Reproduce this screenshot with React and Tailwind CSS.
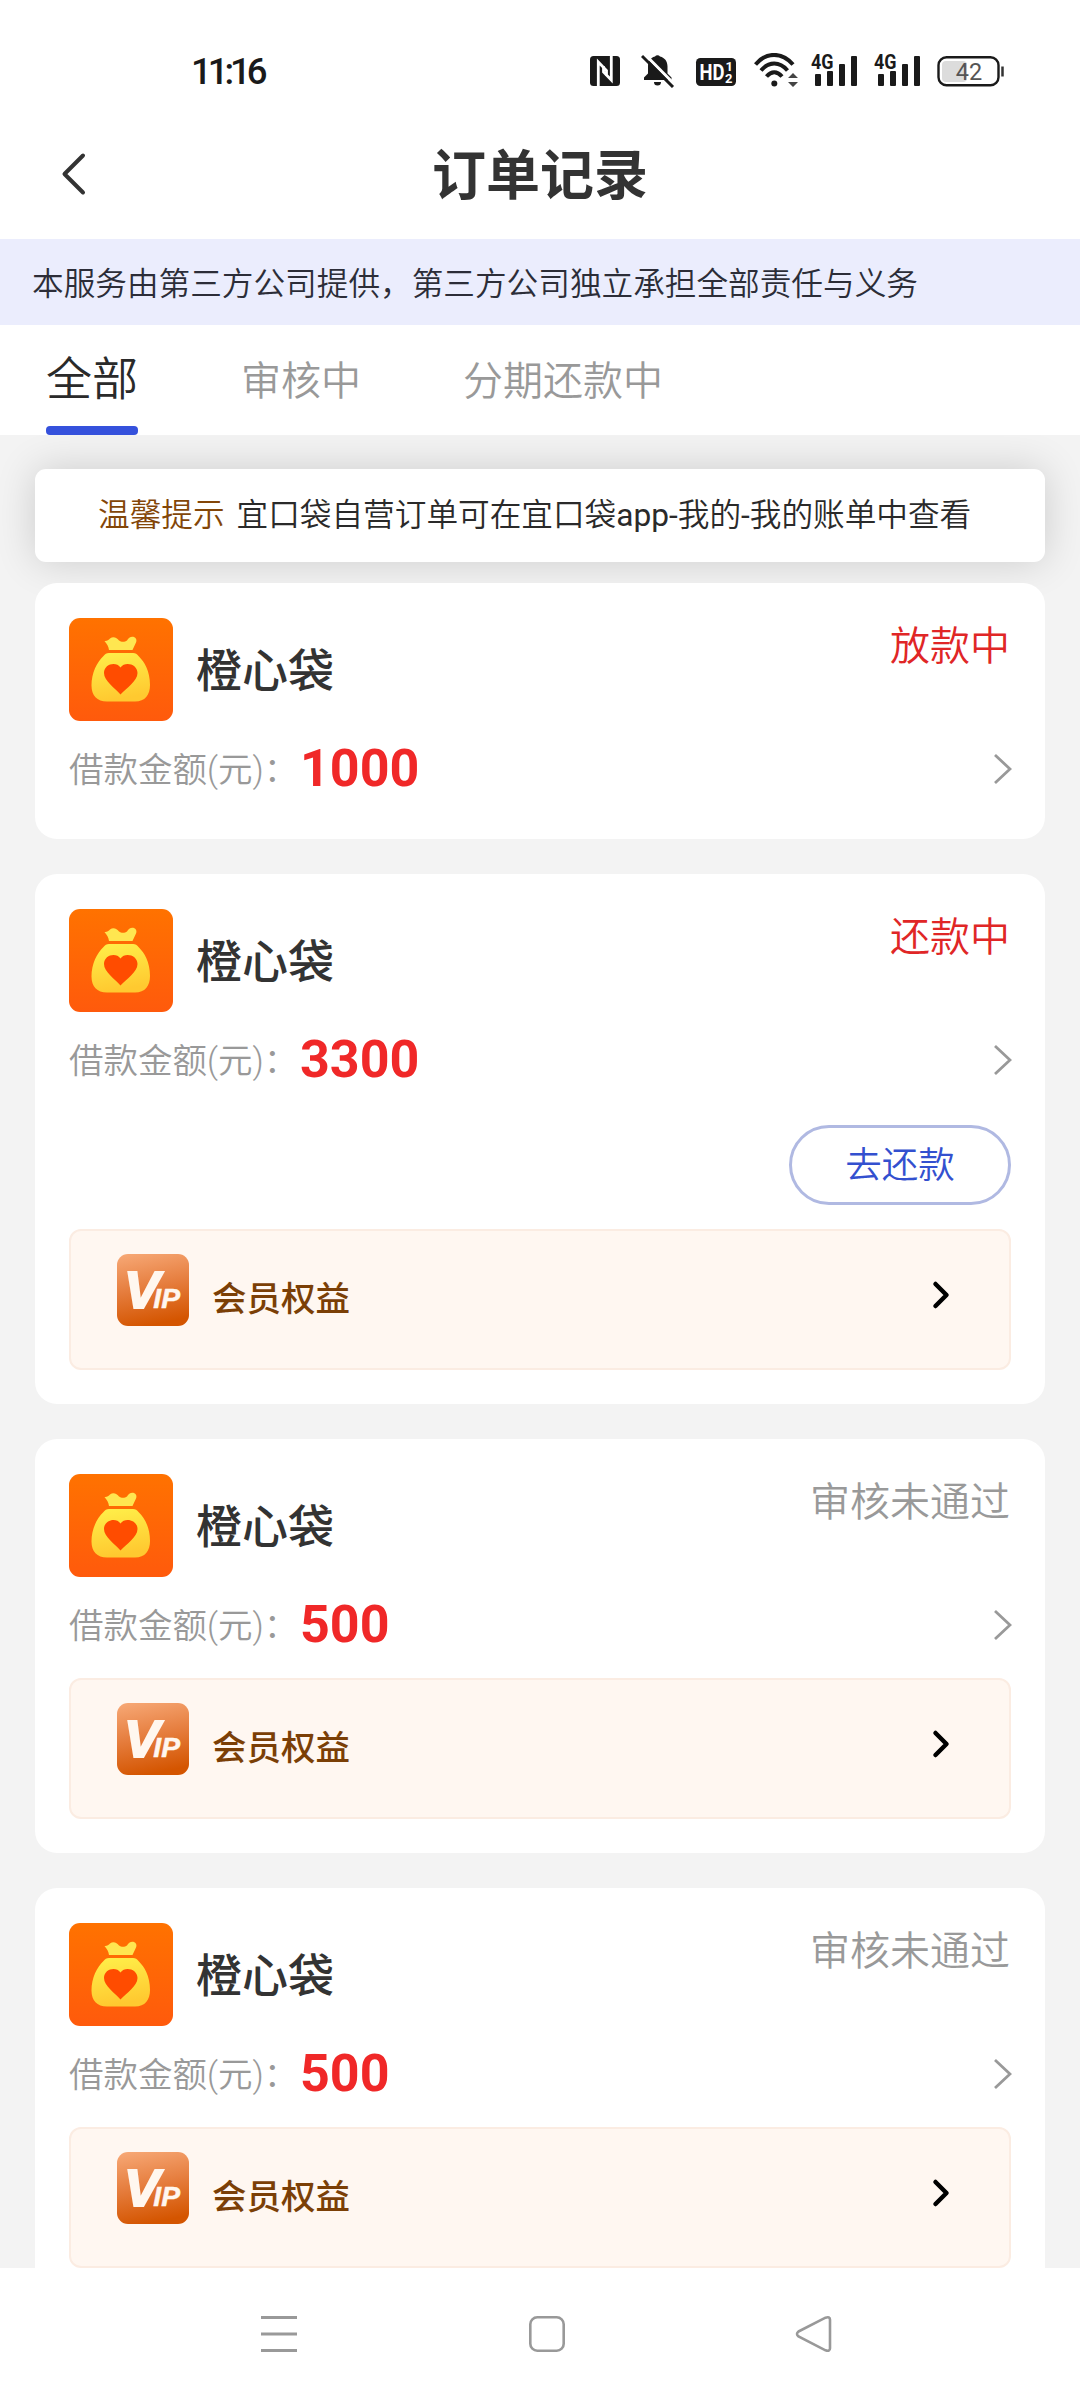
// Order history screen
const orders = [
  { id: 1, name: '橙心袋', amount: 1000, status: '放款中', active: true, repay: false, vip: false },
  { id: 2, name: '橙心袋', amount: 3300, status: '还款中', active: true, repay: true, vip: true },
  { id: 3, name: '橙心袋', amount: 500, status: '审核未通过', active: false, repay: false, vip: true },
  { id: 4, name: '橙心袋', amount: 500, status: '审核未通过', active: false, repay: false, vip: true },
];

function SignalIcon() {
  return (
    <svg className="w-[48px] h-[34px] overflow-visible" viewBox="0 0 48 34" fill="#1a1a1a">
      <text x="0" y="15.5" fontFamily="Roboto, sans-serif" fontWeight="700" fontSize="21" textLength="22.5" lengthAdjust="spacingAndGlyphs">4G</text>
      <rect x="4" y="21" width="6" height="12" rx="1" />
      <rect x="16" y="18" width="6" height="15" rx="1" />
      <rect x="28" y="11" width="6" height="22" rx="1" />
      <rect x="40" y="3" width="6" height="30" rx="1" />
    </svg>
  );
}

function StatusBar() {
  return (
    <div className="h-[110px] shrink-0 flex items-start justify-between pt-[53px] pl-[191px] pr-[75px] text-[#1a1a1a]">
      <span className="text-[36.5px] leading-[38px] font-medium tracking-[-4px]">11:16</span>
      <div className="flex h-[35px]">
        {/* NFC */}
        <svg className="w-[30px] h-[30px] mt-[3px]" viewBox="0 0 30 30">
          <rect width="30" height="30" rx="3.5" fill="#1a1a1a" />
          <path d="M8.300 30V6L16.500 14.500V20M21.300 0V24L13.500 16V10" fill="none" stroke="#fff" strokeWidth="2.800" />
        </svg>
        {/* Muted bell */}
        <svg className="w-[34px] h-[35px] ml-[21px]" viewBox="0 0 34 35" fill="#1a1a1a">
          <path d="M14 3.500a3 3 0 0 1 5 0c5 1.300 7.500 5 7.500 10v7l4 4v2.500H3v-2.500l4-4v-7c0-5 2-8.700 7-10z" />
          <path d="M13 29h7a3.500 3.500 0 0 1-7 0z" />
          <path d="M3.500 1 35 33" stroke="#fff" strokeWidth="3" />
          <path d="M1 3 32 34" stroke="#1a1a1a" strokeWidth="3" />
        </svg>
        {/* HD voice */}
        <svg className="w-[40px] h-[28px] mt-[5px] ml-[21px] overflow-visible" viewBox="0 0 40 28" fill="#fff" fontFamily="Roboto, sans-serif" fontWeight="700">
          <rect width="40" height="28" rx="4.500" fill="#1a1a1a" />
          <text x="3.500" y="22" fontSize="22" textLength="25" lengthAdjust="spacingAndGlyphs">HD</text>
          <text x="29.500" y="13" fontSize="13">1</text>
          <text x="29" y="25" fontSize="13">2</text>
        </svg>
        {/* Wi-Fi */}
        <svg className="w-[46px] h-[35px] ml-[18px]" viewBox="0 0 46 35" fill="none" stroke="#1a1a1a" strokeWidth="4">
          <path d="M1.500 11.500C12-1.300 28-1.300 39 11.500" />
          <path d="M7 17.500C15 8.300 25.500 8.300 33.500 17.500" />
          <path d="M12.500 23.500C17.500 17.800 23 17.800 28 23.500" />
          <circle cx="20.300" cy="30.500" r="3" fill="#1a1a1a" stroke="none" />
          <path d="M39 20l5 5h-10zM39 34l5-5h-10z" fill="#444" stroke="none" />
        </svg>
        <div className="ml-[11px] flex gap-[15px]">
          <SignalIcon />
          <SignalIcon />
        </div>
        {/* Battery */}
        <svg className="w-[68px] h-[35px] ml-[15px]" viewBox="0 0 68 35">
          <rect x="1.500" y="4.200" width="60" height="28" rx="8" fill="#fff" stroke="#1a1a1a" strokeWidth="2.400" />
          <rect x="5" y="8" width="25" height="21" rx="4" fill="#dcdcdc" />
          <path d="M65.500 13.500v10" stroke="#333" strokeWidth="2.500" />
          <text x="32" y="26.500" textAnchor="middle" fontFamily="Roboto, sans-serif" fontSize="23.500" fill="#555">42</text>
        </svg>
      </div>
    </div>
  );
}

function MoneyBag() {
  return (
    <svg className="w-[104px] h-[103px] shrink-0" viewBox="0 0 104 103">
      <defs>
        <linearGradient id="bagBg" x1="0" y1="0" x2="0" y2="1">
          <stop offset="0" stopColor="#ff7200" />
          <stop offset="1" stopColor="#ff5a0c" />
        </linearGradient>
        <linearGradient id="bagFill" x1="0" y1="0" x2="0.200" y2="1">
          <stop offset="0" stopColor="#fff04a" />
          <stop offset="1" stopColor="#ffc930" />
        </linearGradient>
      </defs>
      <rect width="104" height="103" rx="11" fill="url(#bagBg)" />
      <path d="M40 32c-.500-3.500-2-6-4.500-9 2.500.300 4-1 5.500-2.500 3.500-2.500 7-.500 9 2 2.500 2 6 1.500 8 0 1.500-2.500 4-4.500 7-3.500 2.500 1 3 3.500 2 5.500L63.500 32z" fill="#ffe650" />
      <path d="M40 35h24c2.500 0 4 1 5.500 3 6 6 11.500 15 11.500 29 0 10-5 16.500-15 16.500H38c-10 0-15.500-6-15.500-16C22.500 55 28 44 34.500 38c1.500-2 3-3 5.500-3z" fill="url(#bagFill)" />
      <path d="M51.500 76.500C46 70 35 63 35 55 35 46 47 43 51.500 49.500 56 43 68.500 46 68.500 55 68.500 63 57.500 70 51.500 76.500z" fill="#ff4c00" />
    </svg>
  );
}

function VipBadge() {
  return (
    <svg className="w-[72px] h-[72px] shrink-0" viewBox="0 0 72 72">
      <defs>
        <linearGradient id="vipBg" x1="0.200" y1="0" x2="0.400" y2="1">
          <stop offset="0" stopColor="#f6a673" />
          <stop offset="0.500" stopColor="#e57c3c" />
          <stop offset="1" stopColor="#d45500" />
        </linearGradient>
      </defs>
      <rect width="72" height="72" rx="11" fill="url(#vipBg)" />
      <text
        x="7"
        y="54"
        fill="#fff7ef"
        stroke="#fff7ef"
        strokeWidth="2"
        fontFamily="Liberation Sans, sans-serif"
        fontStyle="italic"
        fontWeight="700"
        fontSize="51"
        textLength="56"
        lengthAdjust="spacingAndGlyphs"
      >
        V<tspan fontSize="27" dx="-6" strokeWidth="0.500">IP</tspan>
      </text>
    </svg>
  );
}

function OrderCard({ order }) {
  return (
    <div className="relative shrink-0 bg-white rounded-[22px] px-[34px] pt-[35px] pb-[34px]">
      <div className="flex items-center">
        <MoneyBag />
        <h2 className="ml-[23px] pt-[3px] text-[46px] leading-[46px] font-medium text-[#333]">{order.name}</h2>
        <span
          className={
            'ml-auto mr-px self-start mt-[9px] text-[40px] leading-[40px] font-[350] ' +
            (order.active ? 'text-[#e02626]' : 'text-[#999]')
          }
        >
          {order.status}
        </span>
      </div>

      <div className="mt-4 h-[68px] pb-1 flex items-center">
        <span className="w-[231px] pt-[2px] whitespace-nowrap text-[34.5px] leading-[36px] font-[350] text-[#999]">借款金额(元)：</span>
        <span className="text-[52px] leading-[52px] font-bold text-[#f02828]">{order.amount}</span>
        <svg className="ml-auto mr-[-1px] w-[19px] h-[32px]" viewBox="0 0 19 32" fill="none" stroke="#999" strokeWidth="2.800">
          <path d="M2 2 17 16 2 30" />
        </svg>
      </div>

      {order.repay && (
        <div className="flex justify-end pt-[29px] pb-[7px]">
          <button className="w-[222px] h-[80px] rounded-[40px] border-3 border-[#b0b9e2] pt-[2px] text-[36.5px] leading-[36px] font-[350] text-[#3350cf]">
            去还款
          </button>
        </div>
      )}

      {order.vip && (
        <div className="mt-[17px] h-[141px] rounded-[12px] border-2 border-[#fbece2] bg-[#fff7f1] flex items-start pt-[23px] pl-[46px] pr-[58px]">
          <VipBadge />
          <span className="ml-[23px] mt-[27px] text-[34.5px] leading-[36px] font-medium text-[#7b3f06]">会员权益</span>
          <svg className="ml-auto mt-[25px] w-[20px] h-[32px]" viewBox="0 0 20 32" fill="none" stroke="#000" strokeWidth="4.500" strokeLinecap="round" strokeLinejoin="round">
            <path d="M4.500 5 15.500 16 4.500 27" />
          </svg>
        </div>
      )}
    </div>
  );
}

export default function App() {
  return (
    <div className="w-[1080px] h-[2400px] flex flex-col overflow-hidden bg-white font-[Roboto,'Noto_Sans_CJK_SC',sans-serif]">
      <StatusBar />

      {/* Title */}
      <header className="h-[129px] shrink-0 flex items-center pl-[60px] pr-[86px] pb-[1px]">
        <svg className="w-[26px] h-[44px]" viewBox="0 0 26 44" fill="none" stroke="#333" strokeWidth="4" strokeLinecap="round" strokeLinejoin="round">
          <path d="M23 3.500 4.500 22l18.500 18.500" />
        </svg>
        <h1 className="flex-1 pt-[6px] text-center text-[54px] leading-[54px] font-bold text-[#333]">订单记录</h1>
      </header>

      <p className="h-[86px] shrink-0 flex items-center pl-[32px] pt-[5px] bg-[#ebedfd] text-[31.65px] leading-[32px] font-[350] text-[#2c2d38]">
        本服务由第三方公司提供，第三方公司独立承担全部责任与义务
      </p>

      {/* Tabs */}
      <nav className="relative z-10 h-[110px] shrink-0 flex pl-[46px] bg-white text-[40px] font-[350] text-[#999]">
        <div className="flex flex-col justify-between w-[92px] pt-[31px] text-[46px] leading-[46px] text-[#2a2a2a]">
          全部
          <div className="h-[9px] rounded-[4px] bg-[#3551dc]" />
        </div>
        <div className="ml-[103px] pt-[37px] leading-[40px]">审核中</div>
        <div className="ml-[102px] pt-[37px] leading-[40px]">分期还款中</div>
      </nav>

      <main className="flex-1 min-h-0 overflow-hidden flex flex-col bg-[#f3f3f3] px-[35px] pt-[34px]">
        <div className="shrink-0 h-[93px] mb-[21px] rounded-[11px] bg-white shadow-[0_0_40px_rgba(0,0,0,0.16)] flex items-center pl-[63px] text-[31.65px] leading-[32px] font-[350] text-[#2a2a2a] whitespace-nowrap">
          <span className="text-[#834608] mr-[12px]">温馨提示</span>
          <p>
            宜口袋自营订单可在宜口袋<span className="font-normal">app-</span>我的<span className="font-normal">-</span>我的账单中查看
          </p>
        </div>
        <div className="flex flex-col gap-[35px]">
          {orders.map((o) => (
            <OrderCard key={o.id} order={o} />
          ))}
        </div>
      </main>

      {/* System navigation */}
      <footer className="h-[132px] shrink-0 flex items-start justify-between bg-white pt-[47px] pl-[260px] pr-[247px]">
        <svg className="w-[38px] h-[38px]" viewBox="0 0 38 38" stroke="#999" strokeWidth="2.800">
          <path d="M1 2.500h36M1 19h36M1 35.500h36" />
        </svg>
        <svg className="w-[38px] h-[38px]" viewBox="0 0 38 38" fill="none" stroke="#999" strokeWidth="2.600">
          <rect x="2.300" y="2.300" width="33.400" height="33.400" rx="7" />
        </svg>
        <svg className="w-[38px] h-[38px]" viewBox="0 0 38 38" fill="none" stroke="#999" strokeWidth="2.600">
          <path d="M3.500 16.500 30.500 2.700q4.500-1.500 4.500 2v28.600q0 3.500-4.500 2L3.500 21.500q-3-2.500 0-5z" />
        </svg>
      </footer>
    </div>
  );
}
